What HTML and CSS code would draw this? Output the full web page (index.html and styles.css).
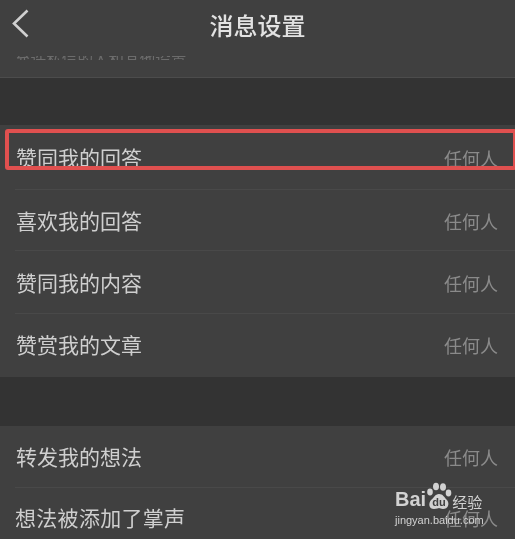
FILE: index.html
```html
<!DOCTYPE html>
<html lang="zh">
<head>
<meta charset="utf-8">
<title>消息设置</title>
<link rel="stylesheet" href="styles.css">
</head>
<body>
<div class="page">
  <header class="head">
    <div class="bar">
      <svg class="back" width="18" height="30" viewBox="0 0 18 30"><path d="M16.500 1.500 3 14.500l13.500 13" fill="none" stroke="#d0d0d0" stroke-width="2.600"/></svg>
      <h1 class="title">消息设置</h1>
    </div>
    <div class="ghost">允许私信的人和其他设置</div>
  </header>
  <div class="gap gap-first"></div>
  <section class="list">
    <div class="row row-a"><span class="label">赞同我的回答</span><span class="val">任何人</span></div>
    <div class="row row-b"><span class="label">喜欢我的回答</span><span class="val">任何人</span></div>
    <div class="row row-c"><span class="label">赞同我的内容</span><span class="val">任何人</span></div>
    <div class="row row-d"><span class="label">赞赏我的文章</span><span class="val">任何人</span></div>
  </section>
  <div class="gap gap-second"></div>
  <section class="list">
    <div class="row row-e"><span class="label">转发我的想法</span><span class="val">任何人</span></div>
    <div class="row row-f"><span class="label label-long">想法被添加了掌声</span><span class="val">任何人</span></div>
  </section>
  <div class="mark"></div>
  <div class="wm">
    <div class="wm-top">
      <span class="wm-bai">Bai</span>
      <svg class="wm-paw" width="26" height="30" viewBox="0 0 26 30">
        <g fill="#d2d2d2">
          <ellipse cx="4" cy="10" rx="2.800" ry="3.400"/>
          <ellipse cx="10" cy="4.500" rx="3" ry="3.800"/>
          <ellipse cx="17" cy="5" rx="3" ry="3.800"/>
          <ellipse cx="22.500" cy="11" rx="2.800" ry="3.400"/>
          <path d="M13 12c4 0 5 3 8 6 3 4 1 9-4 9-2 0-3-1-4-1s-2 1-5 1c-5 0-6-5-3-9 3-2 4-6 8-6z"/>
        </g>
        <text class="wm-du" x="13" y="24" text-anchor="middle">du</text>
      </svg>
      <span class="wm-jy">经验</span>
    </div>
    <div class="wm-url">jingyan.baidu.com</div>
  </div>
</div>
</body>
</html>
```
FILE: styles.css
```css
html, body {
  margin: 0;
  padding: 0;
}
.page {
  position: relative;
  width: 515px;
  height: 539px;
  overflow: hidden;
  background: #404040;
  font-family: "Noto Sans CJK SC", "Liberation Sans", sans-serif;
}
.head {
  height: 78px;
  box-sizing: border-box;
  border-bottom: 1px solid #4c4c4c;
  background: #404040;
  overflow: hidden;
}
.bar {
  position: relative;
  height: 52px;
  display: flex;
  align-items: center;
  justify-content: center;
}
.back {
  position: absolute;
  left: 11px;
  top: 9px;
}
.title {
  margin: -2px 0 0;
  font-size: 24px;
  line-height: 52px;
  font-weight: 500;
  color: #e2e2e2;
  filter: blur(0.6px);
}
.ghost {
  height: 4px;
  margin-top: 4px;
  padding-left: 15px;
  overflow: hidden;
  font-size: 15.600px;
  line-height: 4px;
  color: #6c6c6c;
  filter: blur(0.7px);
}
.gap {
  background: #333333;
}
.gap-first {
  height: 47px;
}
.gap-second {
  height: 49px;
}
.list {
  background: #404040;
}
.row {
  display: flex;
  justify-content: space-between;
  align-items: center;
  box-sizing: border-box;
  margin-left: 15px;
  padding-right: 17px;
  border-bottom: 1px solid #494949;
}
.row-a { height: 65px; }
.row-b { height: 61px; }
.row-c { height: 63px; }
.row-d { height: 63px; border-bottom: 0; padding-bottom: 4px; }
.row-e { height: 62px; padding-bottom: 2px; }
.row-f { height: 51px; border-bottom: 0; padding-top: 7px; }
.label {
  margin-left: 1px;
  font-size: 21px;
  font-weight: 400;
  color: #cfcfcf;
  filter: blur(0.6px);
}
.label-long {
  margin-left: 0;
  letter-spacing: 0.300px;
}
.val {
  padding-top: 2px;
  font-size: 18px;
  color: #8a8a8a;
  filter: blur(0.7px);
}
.mark {
  position: absolute;
  left: 5px;
  top: 129px;
  width: 512px;
  height: 41px;
  box-sizing: border-box;
  border: 4px solid #e0504f;
  border-radius: 3px;
  filter: blur(0.5px);
}
.wm {
  position: absolute;
  left: 395px;
  top: 482px;
  color: #d2d2d2;
  filter: blur(0.4px);
}
.wm-top {
  display: flex;
  align-items: flex-end;
  height: 30px;
}
.wm-bai {
  font-family: "Liberation Sans", sans-serif;
  font-size: 20px;
  line-height: 26px;
  font-weight: 700;
}
.wm-paw {
  margin: 0;
}
.wm-du {
  font-family: "Liberation Sans", sans-serif;
  font-size: 11px;
  font-weight: 700;
  fill: #404040;
}
.wm-jy {
  margin-bottom: -3px;
  font-size: 15px;
  line-height: 26px;
}
.wm-url {
  margin-top: 2px;
  font-family: "Liberation Sans", sans-serif;
  font-size: 11px;
  line-height: 13px;
  white-space: nowrap;
}
```
